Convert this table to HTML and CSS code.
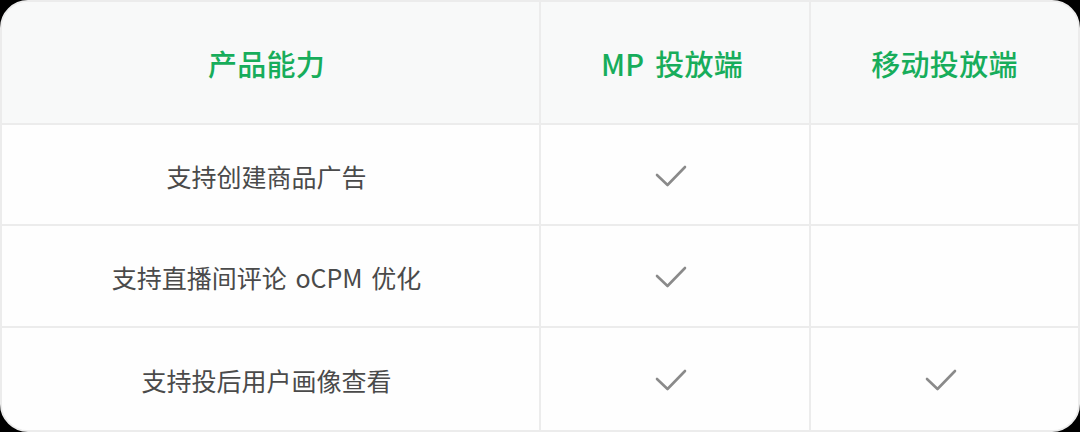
FILE: index.html
```html
<!DOCTYPE html>
<html lang="zh-CN">
<head>
<meta charset="utf-8">
<link rel="stylesheet" href="styles.css">
</head>
<body>
<div class="card">
  <div class="cell head c1">产品能力</div>
  <div class="cell head c2">MP 投放端</div>
  <div class="cell head c3">移动投放端</div>

  <div class="cell c1 r">支持创建商品广告</div>
  <div class="cell c2 r"><svg class="check" viewBox="0 0 34 24"><path d="M3 11 L13.5 21 L31 3"/></svg></div>
  <div class="cell c3 r"></div>

  <div class="cell c1 r">支持直播间评论 oCPM 优化</div>
  <div class="cell c2 r"><svg class="check" viewBox="0 0 34 24"><path d="M3 11 L13.5 21 L31 3"/></svg></div>
  <div class="cell c3 r"></div>

  <div class="cell c1 r last">支持投后用户画像查看</div>
  <div class="cell c2 r last"><svg class="check" viewBox="0 0 34 24"><path d="M3 11 L13.5 21 L31 3"/></svg></div>
  <div class="cell c3 r last"><svg class="check" viewBox="0 0 34 24"><path d="M3 11 L13.5 21 L31 3"/></svg></div>
</div>
</body>
</html>
```

FILE: styles.css
```css
html, body {
  margin: 0;
  padding: 0;
  background: #000;
}
body {
  width: 1080px;
  height: 432px;
  overflow: hidden;
  font-family: "Noto Sans CJK SC", "Noto Sans", sans-serif;
}
.card {
  box-sizing: border-box;
  width: 1080px;
  height: 432px;
  border-radius: 28px;
  border: 2px solid #ececec;
  background: #fdfdfd;
  overflow: hidden;
  display: grid;
  grid-template-columns: 539px 270px 1fr;
  grid-template-rows: 123px 101px 102px 1fr;
}
.cell {
  display: flex;
  align-items: center;
  justify-content: center;
  box-sizing: border-box;
  border-bottom: 2px solid #ececec;
}
.c1, .c2 {
  border-right: 2px solid #ececec;
}
.c1 {
  padding-right: 8px;
}
.last {
  border-bottom: none;
}
.head {
  background: #f8f9f9;
  color: #17ad5b;
  font-size: 29px;
  font-weight: 500;
  letter-spacing: 0.3px;
  word-spacing: 4px;
  padding-top: 0;
}
.head.c2 {
  padding-right: 6px;
}
.r {
  background: #fefefe;
  color: #4a4a4a;
  font-size: 25px;
  word-spacing: 3px;
  padding-top: 2px;
}
.check {
  width: 34px;
  height: 24px;
  margin-left: -8px;
  margin-top: 0;
}
.check path {
  fill: none;
  stroke: #8a8a8a;
  stroke-width: 2.6;
  stroke-linecap: round;
  stroke-linejoin: round;
}
```
